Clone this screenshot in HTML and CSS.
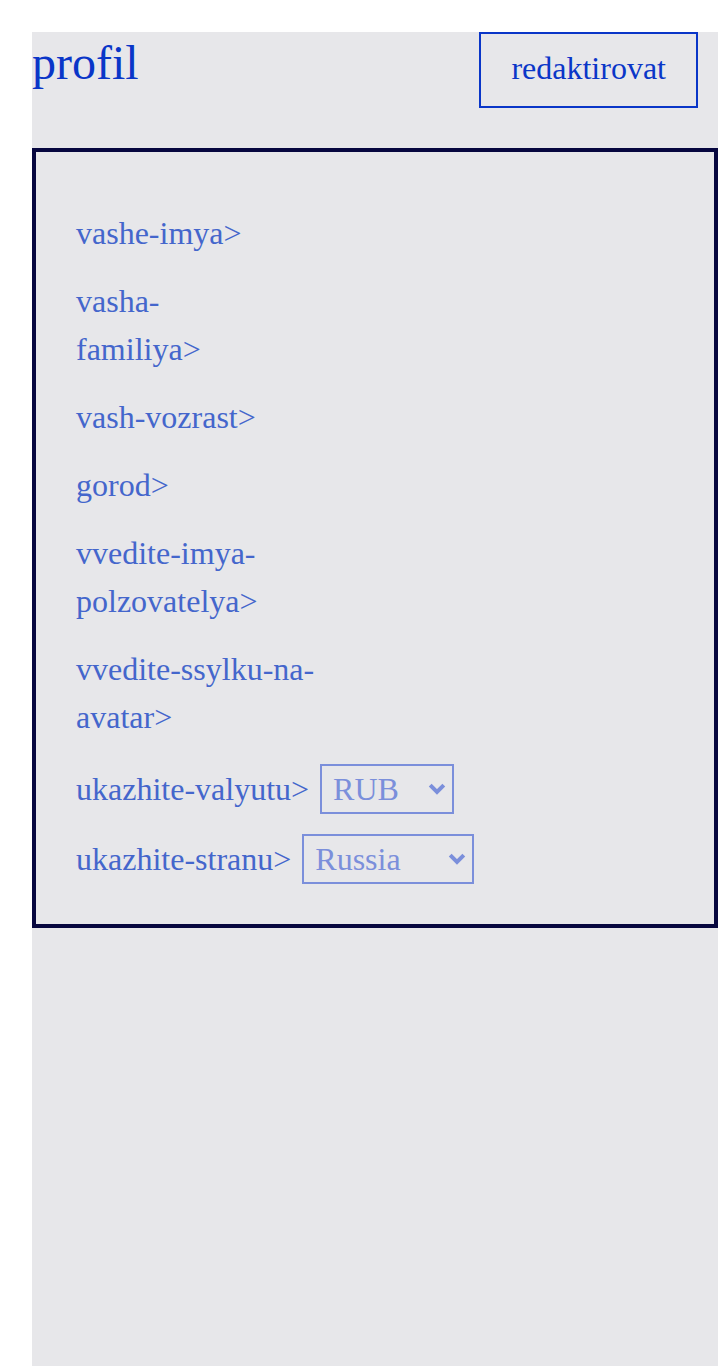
FILE: index.html
```html
<!DOCTYPE html>
<html lang="ru">
<head>
<meta charset="utf-8">
<title>profil</title>
<link rel="stylesheet" href="styles.css">
</head>
<body>
<main class="page">
  <header class="head">
    <h1 class="title">profil</h1>
    <button class="edit" type="button">redaktirovat</button>
  </header>
  <form class="card">
    <label class="field">vashe-imya&gt;</label>
    <label class="field">vasha-<br>familiya&gt;</label>
    <label class="field">vash-vozrast&gt;</label>
    <label class="field">gorod&gt;</label>
    <label class="field">vvedite-imya-<br>polzovatelya&gt;</label>
    <label class="field">vvedite-ssylku-na-<br>avatar&gt;</label>
    <div class="row row-first">
      <label class="field">ukazhite-valyutu&gt;</label>
      <span class="pick-wrap">
        <select class="pick pick-cur"><option>RUB</option><option>USD</option><option>EUR</option></select>
        <svg class="chev" width="18" height="12" viewBox="0 0 18 12" aria-hidden="true"><path d="M2.2 2.2 L9 9 L15.8 2.2" fill="none" stroke="currentColor" stroke-width="4"/></svg>
      </span>
    </div>
    <div class="row">
      <label class="field">ukazhite-stranu&gt;</label>
      <span class="pick-wrap">
        <select class="pick pick-country"><option>Russia</option><option>Belarus</option><option>Kazakhstan</option></select>
        <svg class="chev" width="18" height="12" viewBox="0 0 18 12" aria-hidden="true"><path d="M2.2 2.2 L9 9 L15.8 2.2" fill="none" stroke="currentColor" stroke-width="4"/></svg>
      </span>
    </div>
  </form>
</main>
</body>
</html>
```
FILE: styles.css
```css
html, body {
  margin: 0;
  padding: 0;
  background: #ffffff;
}
body {
  font-family: "Liberation Serif", "Times New Roman", serif;
  overflow: hidden;
}
.page {
  margin: 32px 0 0 32px;
  min-height: 1334px;
  background: #e7e7ea;
  display: flex;
  flex-direction: column;
}
.head {
  display: flex;
  justify-content: space-between;
  align-items: flex-start;
  padding-right: 20px;
}
.title {
  margin: 0;
  padding-top: 3px;
  font-size: 48px;
  font-weight: normal;
  line-height: normal;
  color: #0a36c8;
}
.edit {
  font-family: "Liberation Serif", "Times New Roman", serif;
  font-size: 32px;
  line-height: normal;
  color: #0a36c8;
  background: transparent;
  border: 2px solid #0a36c8;
  height: 76px;
  padding: 0 30px 4px 30px;
  margin: 0;
}
.card {
  margin: 40px 0 0 0;
  border: 4px solid #07073f;
  padding: 57px 40px 40px 40px;
  display: flex;
  flex-direction: column;
  gap: 20px;
}
.field {
  font-size: 32px;
  line-height: 48px;
  color: #4466cc;
}
.row {
  display: flex;
  align-items: center;
  gap: 11px;
  height: 50px;
}
.row-first {
  margin-top: 3px;
}
.pick-wrap {
  position: relative;
  display: flex;
  color: #7b8fdb;
}
.pick {
  appearance: none;
  -webkit-appearance: none;
  font-family: "Liberation Serif", "Times New Roman", serif;
  font-size: 32px;
  color: #7b8fdb;
  background: transparent;
  border: 2px solid #7b8fdb;
  border-radius: 0;
  height: 50px;
  padding: 0 30px 0 11px;
  margin: 0;
}
.pick-cur { width: 134px; }
.pick-country { width: 172px; }
.chev {
  position: absolute;
  right: 8px;
  top: 19px;
  pointer-events: none;
}
```
